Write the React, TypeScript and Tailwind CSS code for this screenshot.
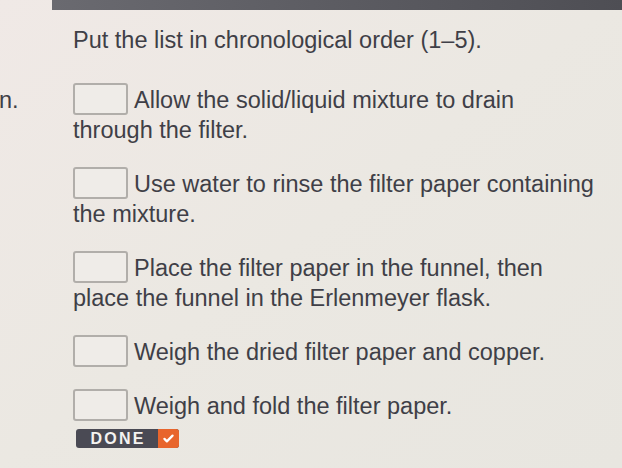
import React from "react";

const steps = [
  ["Allow the solid/liquid mixture to drain", "through the filter."],
  ["Use water to rinse the filter paper containing", "the mixture."],
  ["Place the filter paper in the funnel, then", "place the funnel in the Erlenmeyer flask."],
  ["Weigh the dried filter paper and copper."],
  ["Weigh and fold the filter paper."],
];

function Box() {
  return (
    <span className="inline-block align-top -mt-0.5 mr-[6px] h-[32px] w-[55px] rounded-[3px] border-2 border-[#b1aeaa] bg-[#efece8]" />
  );
}

export default function App() {
  return (
    <div
      className="h-[468px] w-[622px] overflow-hidden bg-gradient-to-br from-[#f0e9e6] via-[#ebe8e2] to-[#e8e6e0] text-[#3f3f47]"
      style={{ fontFamily: '"Liberation Sans", Arial, sans-serif' }}
    >
      {/* dark strip along the top */}
      <div className="ml-[52px] h-[10px] bg-gradient-to-r from-[#6a6a70] to-[#4e4e54]" />

      <div className="grid grid-cols-[73px_1fr] text-[23.5px] leading-[30px]">
        <div />
        <h1 className="mt-[15px] whitespace-nowrap">Put the list in chronological order (1–5).</h1>

        <div className="mt-[30px] -ml-[1px]">n.</div>
        <div className="mt-[30px] flex flex-col gap-6">
          {steps.map((lines, i) => (
            <p key={i} className="whitespace-nowrap">
              <Box />
              {lines[0]}
              {lines[1] && (
                <>
                  <br />
                  {lines[1]}
                </>
              )}
            </p>
          ))}
          <button className="-mt-4 ml-[3px] flex h-[19px] w-[103px] overflow-hidden rounded-[3px] bg-[#4a4a54] text-[#f4f2f0]">
            <span className="flex flex-1 items-center justify-center pl-0.5 text-[16px] font-bold leading-none tracking-[0.14em]">
              DONE
            </span>
            <span className="flex w-[21px] items-center justify-center bg-[#e8652c]">
              <svg viewBox="0 0 16 16" className="h-[13px] w-[13px]">
                <path d="M3 8.5l3 3 7-7" fill="none" stroke="#fff" strokeWidth="2.8" strokeLinecap="round" strokeLinejoin="round" />
              </svg>
            </span>
          </button>
        </div>
      </div>
    </div>
  );
}
